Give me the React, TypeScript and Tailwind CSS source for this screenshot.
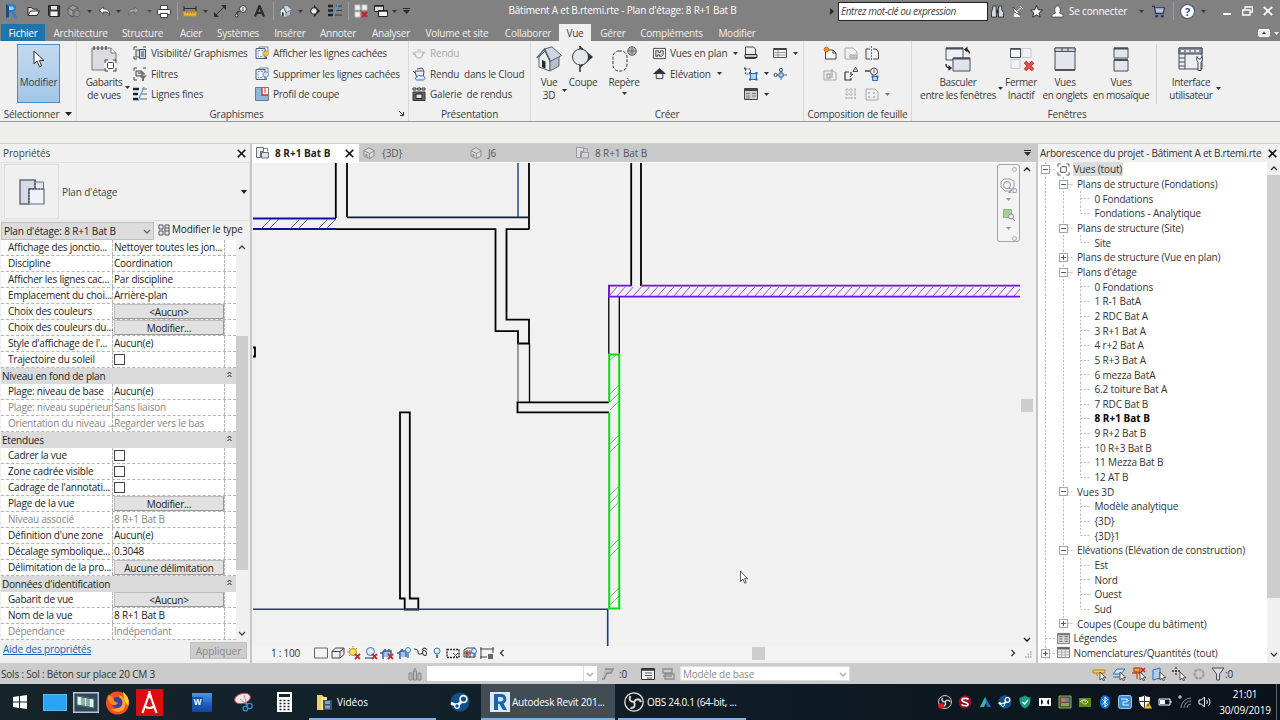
import type { ReactNode } from 'react';
import clsx from 'clsx';

type IcoProps = { w: number; h?: number; vb?: string; className?: string; children: ReactNode };

function Ico({ w, h = w, vb = '0 0 14 14', className, children }: IcoProps) {
  return (
    <svg width={w} height={h} viewBox={vb} fill="none" className={clsx('shrink-0', className)}>
      {children}
    </svg>
  );
}

function Caret({ className }: { className?: string }) {
  return (
    <Ico w={5} h={3} vb="0 0 5 3" className={className}>
      <path d="M0 0h5L2.5 3z" fill="currentColor" />
    </Ico>
  );
}

function Sep({ className }: { className?: string }) {
  return <div className={clsx('h-[18px] w-px shrink-0 bg-[#9c9c9c]', className)} />;
}

function XMark({ size = 9, className }: { size?: number; className?: string }) {
  return (
    <Ico w={size} vb="0 0 9 9" className={className}>
      <path d="M.7.7l7.6 7.6M8.3.7L.7 8.3" stroke="currentColor" strokeWidth="1.6" />
    </Ico>
  );
}

function Chevron({ dir, className }: { dir: 'up' | 'down' | 'left' | 'right'; className?: string }) {
  const d = {
    up: 'M1 5l3-3 3 3',
    down: 'M1 3l3 3 3-3',
    left: 'M5.5 1l-3 3 3 3',
    right: 'M2.5 1l3 3-3 3',
  }[dir];
  return (
    <Ico w={8} vb="0 0 8 8" className={className}>
      <path d={d} stroke="currentColor" strokeWidth="1.3" />
    </Ico>
  );
}

/* ---------- shared drawings ---------- */

function HouseIcon({ size, className }: { size: number; className?: string }) {
  return (
    <Ico w={size} vb="0 0 26 26" className={className}>
      <path d="M3 11l6-6 5 10v10l-11-4z" fill="#e9edf2" stroke="#5b626c" />
      <path d="M14 15l9-5v10l-9 5z" fill="#b3bfd0" stroke="#5b626c" />
      <path d="M8.500 3L16 .8 25.500 9.500 14 15.500z" fill="#cdd6e1" stroke="#5b626c" />
      <path d="M.8 12L8.500 3l6 12.500" stroke="#5b626c" strokeWidth="1.500" />
      <path d="M6 14l3.500 1.500v7L6 21.300z" fill="#26292e" />
    </Ico>
  );
}

function TabHouseIcon() {
  return (
    <Ico w={12} vb="0 0 12 12">
      <path d="M1 3.500L6 .8l5 2.700v5.500l-4.500 2.500L1 9z" fill="#dadada" stroke="#8c8c8c" />
      <path d="M1.500 4l5 2.500L11 4M6.500 6.500v5" stroke="#8c8c8c" />
      <path d="M2.500 6.500l2 1V10l-2-1z" fill="#8c8c8c" />
    </Ico>
  );
}

function PlanIcon({ size, className }: { size: number; className?: string }) {
  return (
    <Ico w={size} vb="0 0 26 26" className={className}>
      <path d="M1 1h15v9h-6v15H1z" fill="#d5d9e8" stroke="#666c78" strokeWidth="1.500" />
      <path d="M16.500 3h8v7" fill="#dfe2ee" stroke="#6c727e" />
      <path d="M16 1v9h-6" stroke="#444a55" strokeDasharray="2 1" />
      <path d="M10 10h15v15H10z" fill="#f0f2fa" stroke="#666c78" strokeWidth="1.200" />
      <path d="M10 10h15M10 10v15" stroke="#444a55" strokeDasharray="2 1" />
    </Ico>
  );
}

// same motif redrawn for small sizes, where the dashes of the large one clog up
function SmallPlanIcon({ faded, className }: { faded?: boolean; className?: string }) {
  return (
    <Ico w={13} h={12} vb="0 0 13 12" className={clsx(faded && 'opacity-50', className)}>
      <path d="M.5.5h7v4h-3v6h-4z" fill="#eceef5" stroke="#666c78" />
      <path d="M7.500 1.500h4v3" stroke="#7b818d" />
      <path d="M5.500 5.500h7v5.500h-7z" fill="#dfe2ee" stroke="#666c78" />
    </Ico>
  );
}

function SteamIcon({ size }: { size: number }) {
  return (
    <Ico w={size} vb="0 0 20 20">
      <circle cx="10" cy="10" r="9.500" fill="#12508c" />
      <path d="M1 11l6 3M8 13l5-5" stroke="#fff" strokeWidth="3" />
      <circle cx="13.500" cy="7" r="3.400" fill="#1a4d80" stroke="#fff" strokeWidth="1.700" />
      <circle cx="7" cy="14" r="2.300" fill="#12508c" stroke="#fff" strokeWidth="1.300" />
    </Ico>
  );
}

function ObsIcon({ size, dot }: { size: number; dot?: boolean }) {
  return (
    <Ico w={size} vb="0 0 20 20">
      <circle cx="10" cy="10" r="9.200" fill="#15181b" stroke="#e6e6e6" strokeWidth="1.300" />
      <path d="M10 10c-4 0-5.500-3-3.500-6M10 10c2-3.600 5.500-3.500 7 0M10 10c2 3.500 0 6.500-3.500 6" stroke="#dcdcdc" strokeWidth="2" />
      {dot && <circle cx="4.500" cy="15.500" r="4.200" fill="#e01b1b" />}
    </Ico>
  );
}

function CursorShape({ w, h, className }: { w: number; h: number; className?: string }) {
  return (
    <Ico w={w} h={h} vb="0 0 12 18" className={className}>
      <path d="M1 1v13l3-3 2.500 5.800 2.200-1L6.300 10.500H11z" fill="#fff" stroke="#333" />
    </Ico>
  );
}

/* ---------- title bar ---------- */

function TitleBar() {
  return (
    <div className="flex h-6 items-center pb-0.5 text-[#3a3a3a]">
      <Ico w={13} h={16} vb="0 0 13 16" className="ml-[5px]">
        <path d="M1 1h6.500a4 4 0 011.700 7.500L12 15H9L6.500 9.500H4V15H1z" fill="#2f7fc4" />
        <path d="M4 3.500h3a1.700 1.700 0 010 3.500H4z" fill="#a9d0ee" />
        <path d="M1 1v14l3-1.500v-10z" fill="#164f86" />
      </Ico>
      <Ico w={13} h={11} vb="0 0 13 11" className="ml-[9px]">
        <path d="M1 9V1.500h3.500l1 1.500H10v2" fill="#e6e6e6" stroke="#2c2c2c" />
        <path d="M1 9.500l2.500-4.500h9L10 9.500z" fill="#fafafa" stroke="#2c2c2c" />
      </Ico>
      <Ico w={12} vb="0 0 12 12" className="ml-2">
        <path d="M.5.5h11v11h-10l-1-1z" fill="#3b3f45" stroke="#24272b" />
        <rect x="3" y="1" width="6" height="3.500" fill="#e8e8e8" />
        <rect x="2.500" y="6.500" width="7" height="4.500" fill="#f2f2f2" />
      </Ico>
      <Ico w={14} className="ml-[7px]">
        <path d="M1 4l5-3 5 3v6l-5 3-5-3z" fill="#9b9b9b" stroke="#5a5a5a" />
        <path d="M1 4l5 2.500L11 4M6 6.500V13" stroke="#5a5a5a" />
        <circle cx="10" cy="9.500" r="3.200" fill="#8d8d8d" stroke="#666" />
      </Ico>
      <Caret className="ml-1.5" />
      <Ico w={13} h={11} vb="0 0 12 10" className="ml-1.5">
        <path d="M5 .8L1 4l4 3.200V5.300c3 0 4.600.5 5.600 3.200.5-4-1.600-5.800-5.600-5.800z" fill="#fff" stroke="#333" strokeWidth=".7" />
      </Ico>
      <Caret className="ml-[5px]" />
      <Ico w={13} h={11} vb="0 0 12 10" className="ml-1.5">
        <path d="M7 .8L11 4 7 7.200V5.300c-3 0-4.600.5-5.600 3.200-.5-4 1.600-5.800 5.600-5.800z" fill="#a2a2a2" stroke="#636363" strokeWidth=".7" />
      </Ico>
      <Caret className="ml-[7px] opacity-60" />
      <Ico w={14} h={13} vb="0 0 14 13" className="ml-[5px]">
        <path d="M3.500.5h7V5h-7z" fill="#fff" stroke="#444" />
        <rect x=".5" y="4.500" width="13" height="5" rx="1" fill="#f3f3f3" stroke="#333" />
        <path d="M3.500 8.500h7v4h-7z" fill="#fff" stroke="#444" />
      </Ico>
      <Sep className="ml-1.5" />
      <Ico w={14} h={11} vb="0 0 14 11" className="ml-[5px]">
        <path d="M1 0v5M13 0v5M1 2.500h12" stroke="#2b2b2b" />
        <rect x=".5" y="6" width="13" height="4" fill="#f0b642" stroke="#c98d25" />
        <path d="M3.500 6v2M6 6v2M8.500 6v2M11 6v2" stroke="#a9741a" strokeWidth=".7" />
      </Ico>
      <Caret className="ml-1.5" />
      <Ico w={12} vb="0 0 12 12" className="ml-1.5">
        <path d="M2 10l8-8" stroke="#2f2f2f" />
        <path d="M0 12V7l5 5zM12 0v5L7 0z" fill="#2f2f2f" />
      </Ico>
      <Ico w={13} vb="0 0 13 13" className="ml-2">
        <circle cx="9" cy="4" r="3.400" fill="#fff" stroke="#2b2b2b" />
        <path d="M9 2.200V6M5.500 6.500L3 7v3" stroke="#222" />
        <circle cx="2.500" cy="10.500" r="1.500" fill="#ddd" stroke="#222" />
      </Ico>
      <Ico w={11} h={12} vb="0 0 11 12" className="ml-[7px]">
        <path d="M1 11.500L5.500 1 10 11.500M2.800 8h5.400" stroke="#2a2a2a" strokeWidth="2.200" />
      </Ico>
      <Sep className="ml-2" />
      <HouseIcon size={13} className="ml-[5px]" />
      <Caret className="ml-1.5" />
      <Ico w={10} h={12} vb="0 0 10 12" className="ml-[7px]">
        <path d="M4 0l6 6-6 6z" fill="#222" />
        <circle cx="4" cy="6" r="3.300" fill="#eee" stroke="#222" />
      </Ico>
      <Ico w={14} className="ml-2">
        <path d="M0 2h5M0 6.500h5M0 11h5" stroke="#232323" strokeWidth="2.400" />
        <path d="M8 2h6M7 6.500h7M6 11h8" stroke="#3a3a3a" />
        <path d="M10 0L5 14" stroke="#4ea2de" strokeWidth="1.200" />
      </Ico>
      <Sep className="ml-1.5" />
      <Ico w={14} className="ml-[5px]">
        <path d="M1 1h5v5H1zM8 1h5v5H8zM1 8h5v5H1z" fill="#f2f2f2" stroke="#c2c2c2" />
        <path d="M8 8l5 5M13 8l-5 5" stroke="#c4252b" strokeWidth="2.400" />
      </Ico>
      <Ico w={14} className="ml-1.5">
        <path d="M.5 1.500h9v6h-9z" fill="#ddd" stroke="#222" />
        <path d="M4.500 6.500h9v6h-9z" fill="#f3f3f3" stroke="#222" />
        <path d="M4.500 7h9M.5 2h9" stroke="#222" strokeWidth="1.400" />
      </Ico>
      <Caret className="ml-1" />
      <Ico w={7} h={6} vb="0 0 7 6" className="ml-1.5">
        <path d="M0 .5h7" stroke="#2b2b2b" />
        <path d="M0 2h7L3.500 6z" fill="#2b2b2b" />
      </Ico>
      <div className="ml-[97px] w-[231px] shrink-0 pb-[3px] text-center text-[10px] tracking-[-0.22px] whitespace-nowrap text-white">
        Bâtiment A et B.rtemi.rte - Plan d'étage: 8 R+1 Bat B
      </div>
      <Ico w={4} h={7} vb="0 0 4 7" className="ml-[92px]">
        <path d="M0 0l4 3.500L0 7z" fill="#2b2b2b" />
      </Ico>
      <div className="ml-1 flex h-[19px] w-[150px] shrink-0 items-center border border-[#222] bg-white pl-[2px] text-[10px] tracking-[-0.42px] whitespace-nowrap italic text-[#444]">
        Entrez mot-clé ou expression
      </div>
      <Ico w={13} className="ml-[3px]">
        <path d="M2.500 1h3v4L6 13H.5V8zM8.500 1h3v4l2 3v5H8V5z" fill="#d5dae0" stroke="#2b2f36" />
        <path d="M6 5h2v4H6z" fill="#2b2f36" />
      </Ico>
      <Ico w={12} vb="0 0 12 12" className="ml-2">
        <path d="M1 2c0 5 3 7 7.500 7z" fill="#fff" stroke="#333" strokeWidth=".8" />
        <path d="M5 6l5-4M8 1l3 3M3 8l-1 3.500h6z" stroke="#eee" fill="#eee" />
      </Ico>
      <Ico w={13} className="ml-[6px]">
        <path d="M7 .8l1.800 4.300 4.600.4-3.500 3 1.100 4.600L7 10.600l-4 2.500 1.100-4.600-3.500-3 4.600-.4z" fill="#f6f6f6" stroke="#222" />
      </Ico>
      <Ico w={13} className="ml-2">
        <path d="M1 13v-2c0-1.200 3-1.500 4-2.500C3.500 7 3.500 1 7 1s3.500 6 2 7.500c1 1 4 1.300 4 2.500v2z" fill="#fff" stroke="#3a3a3a" strokeWidth=".8" />
      </Ico>
      <div className="ml-[5px] w-[62px] shrink-0 text-[10px] tracking-[-0.2px] whitespace-nowrap text-white">Se connecter</div>
      <Caret className="ml-2" />
      <Ico w={13} className="ml-2">
        <path d="M0 1.500h2.500L4 9h8l1.500-6H3" fill="#b9c5de" stroke="#2a3355" strokeWidth="1.200" />
        <circle cx="5" cy="12" r="1.500" fill="#2a3355" />
        <circle cx="11" cy="12" r="1.500" fill="#2a3355" />
      </Ico>
      <Sep className="ml-2" />
      <div className="ml-[7px] flex size-[13px] shrink-0 items-center justify-center rounded-full bg-white text-[11px] font-bold text-[#28529c] ring-1 ring-[#44557a]">
        ?
      </div>
      <Caret className="ml-[7px]" />
      <div className="mt-1.5 ml-[17px] h-0.5 w-2 shrink-0 bg-white" />
      <Ico w={11} h={10} vb="0 0 11 10" className="ml-[11px]">
        <path d="M3 3V1h7.500v5H8" stroke="#fff" strokeWidth="1.300" />
        <path d="M.7 4h7.300v5H.7z" stroke="#fff" strokeWidth="1.300" />
      </Ico>
      <XMark size={10} className="ml-2.5 text-white" />
    </div>
  );
}

const TABS: [string, string][] = [
  ['Architecture', 'w-[53px] ml-[9px]'],
  ['Structure', 'w-[39px] ml-4'],
  ['Acier', 'w-[22px] ml-[18px]'],
  ['Systèmes', 'w-10 ml-4'],
  ['Insérer', 'w-[30px] ml-[17px]'],
  ['Annoter', 'w-[34px] ml-4'],
  ['Analyser', 'w-[36px] ml-[18px]'],
  ['Volume et site', 'w-[62px] ml-[17px]'],
  ['Collaborer', 'w-[46px] ml-[17px]'],
  ['Vue', 'w-[32px] ml-2 bg-[#f0f0f0] text-[#3c3c3c]'],
  ['Gérer', 'w-6 ml-[10px]'],
  ['Compléments', 'w-[61px] ml-4'],
  ['Modifier', 'w-[38px] ml-4'],
];

function RibbonTabs() {
  return (
    <div className="flex h-[17px] text-[10px] tracking-[-0.25px] text-[#f0f0f0]">
      <div className="ml-px flex w-11 items-center justify-center bg-[#1e74ab] text-white">Fichier</div>
      {TABS.map(([name, cls]) => (
        <div key={name} className={clsx('flex shrink-0 items-center justify-center whitespace-nowrap', cls)}>
          {name}
        </div>
      ))}
      <div className="mt-[5px] ml-auto flex h-2 items-start">
        <Ico w={12} h={8} vb="0 0 12 8" className="mr-1">
          <rect x=".5" y=".5" width="11" height="7" rx="1.500" fill="#e9e9e9" stroke="#fff" />
          <path d="M4 5l2-2.500L8 5z" fill="#333" />
        </Ico>
        <Caret className="mt-[3px] mr-px text-[#eee]" />
      </div>
    </div>
  );
}

/* ---------- ribbon ---------- */

function Panel({ title, className, children, extra }: { title: string; className: string; children: ReactNode; extra?: ReactNode }) {
  return (
    <div className={clsx('flex shrink-0 flex-col border-r border-[#d9d9d9]', className)}>
      <div className="flex h-[65px]">{children}</div>
      <div className="flex h-[15px] items-center justify-center whitespace-nowrap">
        {title}
        {extra}
      </div>
    </div>
  );
}

function BigButton({ icon, lines, className }: { icon: ReactNode; lines: string[]; className: string }) {
  return (
    <div className={clsx('flex shrink-0 flex-col items-center tracking-[-0.34px] whitespace-nowrap', className)}>
      <div className="mt-[5px] flex h-[29px] items-start">{icon}</div>
      {lines.map((l) => (
        <div key={l} className="flex h-[13.5px] items-center">
          {l}
        </div>
      ))}
    </div>
  );
}

function SmallRow({ icon, label, disabled, caret }: { icon: ReactNode; label?: string; disabled?: boolean; caret?: boolean }) {
  return (
    <div className={clsx('flex h-[20.5px] items-center whitespace-pre', disabled && 'text-[#a9a9a9]')}>
      {icon}
      {label && <span className="ml-1">{label}</span>}
      {caret && <Caret className="ml-1.5 text-[#333]" />}
    </div>
  );
}

function FrameCorners() {
  return <path d="M1 4V1h3M10 1h3M1 10v3h3" stroke="#444" />;
}

function Ribbon() {
  return (
    <div className="flex h-[81px] border-b border-[#9a9a9a] bg-[#f0f0f0] text-[10px] tracking-[-0.2px] text-[#3c3c3c]">
      <Panel title="Sélectionner" className="w-[77px]" extra={<Ico w={7} h={4} vb="0 0 7 4" className="ml-1.5"><path d="M0 0h7L3.500 4z" fill="#222" /></Ico>}>
        <div className="mt-[3px] ml-[17px] flex h-[59px] w-[43px] flex-col items-center border border-[#4a8cc8] bg-[linear-gradient(#c3d9ef,#a3c6e8)]">
          <CursorShape w={12} h={18} className="mt-[5px]" />
          <div className="mt-[9px] whitespace-nowrap">Modifier</div>
        </div>
      </Panel>

      <Panel
        title="Graphismes"
        className="w-[332px]"
        extra={
          <Ico w={5} vb="0 0 5 5" className="-mr-[128px] ml-[135px]">
            <path d="M0 0l4 4M4.500 1v3.500H1" stroke="#333" />
          </Ico>
        }
      >
        <BigButton
          className="ml-[6px] w-[42px]"
          lines={['Gabarits', 'de vues']}
          icon={
            <Ico w={26} vb="0 0 26 26">
              <path d="M1 2h19l5 5v17H1z" fill="#dcdce0" stroke="#77777c" />
              <path d="M20 2v5h5" fill="#f5f5f5" stroke="#77777c" />
              <path d="M3 0v4M7 0v4M11 0v4M15 0v4" stroke="#444" strokeWidth="1.200" />
              <path d="M13 14h13v12H13z" fill="#f0f0f0" />
              <path d="M14 17v-3h3M22 14h3v3M25 22v3h-3M17 25h-3v-3" stroke="#333" />
              <rect x="16.500" y="16.500" width="6" height="6" rx="1" fill="#fff" stroke="#444" />
            </Ico>
          }
        />
        <Caret className="mt-[45px] text-[#333]" />
        <div className="ml-[3px] w-[122px] pt-[2px]">
          <SmallRow
            label="Visibilité/ Graphismes"
            icon={
              <Ico w={14}>
                <FrameCorners />
                <rect x="3" y="4" width="5" height="7" fill="#ddd" stroke="#555" />
                <path d="M6.500 3.500h6v9h-6z" fill="#cfd8e6" stroke="#41506b" />
                <path d="M8 6h3M8 8h3M8 10h3" stroke="#41506b" />
              </Ico>
            }
          />
          <SmallRow
            label="Filtres"
            icon={
              <Ico w={14}>
                <FrameCorners />
                <path d="M3 4h6v5H3zM5 6h6v2" stroke="#444" fill="#ddd" />
                <path d="M6 8.500h8l-3 3V14H9v-2.500z" fill="#6b6f77" />
              </Ico>
            }
          />
          <SmallRow
            label="Lignes fines"
            icon={
              <Ico w={14}>
                <path d="M0 2h6M0 7h5M0 12h5" stroke="#222" strokeWidth="2.400" />
                <path d="M9 2h5M8 7h6M7 12h7" stroke="#666" />
                <path d="M11 0L5 14" stroke="#4ea2de" strokeWidth="1.300" />
              </Ico>
            }
          />
        </div>
        <div className="pt-[2px] tracking-[-0.27px]">
          <SmallRow
            label="Afficher les lignes cachées"
            icon={
              <Ico w={14}>
                <path d="M4 1h9v5H4z" fill="#e8edf6" stroke="#7b8797" />
                <path d="M1 2.500h9v10H1z" fill="#eef1f8" stroke="#4a5e80" />
                <path d="M3 4.500h5v6H3z" stroke="#8ba0c2" strokeDasharray="2 1" />
                <circle cx="11" cy="7.500" r="2.600" fill="#f8c544" stroke="#b9831c" strokeWidth=".6" />
                <path d="M10 10.500h2v2.500h-2z" fill="#666" />
              </Ico>
            }
          />
          <SmallRow
            label="Supprimer les lignes cachées"
            icon={
              <Ico w={14}>
                <path d="M4 1h9v5H4z" fill="#e8edf6" stroke="#7b8797" />
                <path d="M1 2.500h9v10H1z" fill="#eef1f8" stroke="#4a5e80" />
                <path d="M3 4.500h5v6H3z" stroke="#8ba0c2" strokeDasharray="2 1" />
                <circle cx="11" cy="7.500" r="2.600" fill="#dbe7f8" stroke="#6c88b2" strokeWidth=".8" />
                <path d="M10 10.500h2v2.500h-2z" fill="#6c88b2" />
              </Ico>
            }
          />
          <SmallRow
            label="Profil de coupe"
            icon={
              <Ico w={14}>
                <path d="M.5.5h13v13H.5z" fill="#fff" stroke="#777" />
                <path d="M1 1h6v7h6v5H1z" fill="#8db6da" />
                <path d="M7 1v7h6" stroke="#cc2a35" strokeWidth="1.300" />
                <path d="M10 1v5" stroke="#cc2a35" />
              </Ico>
            }
          />
        </div>
      </Panel>

      <Panel title="Présentation" className="w-[122px]">
        <div className="pt-[2px] pl-[3px]">
          <SmallRow
            label="Rendu"
            disabled
            icon={
              <Ico w={14}>
                <path d="M3 6h8c0 4-1.500 6-4 6s-4-2-4-6zM1 6c0 2 1 3 2.500 3M11 8l2-2M5 4h4" stroke="#bcbcbc" strokeWidth="1.200" />
              </Ico>
            }
          />
          <SmallRow
            label="Rendu  dans le Cloud"
            icon={
              <Ico w={14}>
                <path d="M3 4h9l-1 8H5zM1 4l3 3M5 2l5-1 2 3" stroke="#44506a" fill="#eef2fa" />
                <path d="M5 13c-2 0-2-3 0-3 0-2 3-2 4-1 2-1 4 1 4 2s-1 2-2 2z" fill="#dfeaff" stroke="#3c6ecb" />
              </Ico>
            }
          />
          <SmallRow
            label="Galerie  de rendus"
            icon={
              <Ico w={14}>
                <path d="M1 1h3v2H1zM5.500 1h3v2h-3zM10 1h3v2h-3z" stroke="#333" />
                <path d="M1 5h12v8.500H1z" fill="#62666d" stroke="#333" />
                <path d="M4 7h6v4.500H4z" fill="#e5e5e5" stroke="#222" />
              </Ico>
            }
          />
        </div>
      </Panel>

      <Panel title="Créer" className="w-[273px]">
        <BigButton className="ml-[3px] w-[30px]" lines={['Vue', '3D']} icon={<HouseIcon size={26} />} />
        <Caret className="mt-[48px] -mr-[5px] -ml-0.5 text-[#333]" />
        <BigButton
          className="ml-1 w-[34px]"
          lines={['Coupe']}
          icon={
            <Ico w={24} h={26} vb="0 0 24 26">
              <path d="M9 0l13 11L9 22z" fill="#2f3238" />
              <path d="M9 0v26" stroke="#2f3238" strokeWidth="1.500" />
              <circle cx="9.500" cy="11" r="8" fill="#e4e7ec" stroke="#3c4048" />
            </Ico>
          }
        />
        <BigButton
          className="ml-[6px] w-[36px]"
          lines={['Repère']}
          icon={
            <Ico w={25} h={26} vb="0 0 25 26">
              <rect x="1" y="5" width="14" height="20" rx="6" stroke="#333" strokeDasharray="3 1.500" />
              <circle cx="20" cy="5" r="4.300" fill="#b5b5b5" stroke="#666" />
              <path d="M16 5h8M20 1v8" stroke="#555" strokeWidth=".8" />
            </Ico>
          }
        />
        <Caret className="mt-[51px] mr-[15px] -ml-[20px] text-[#333]" />
        <div className="ml-[11px] w-[91px] pt-[2px]">
          <SmallRow
            label="Vues en plan"
            caret
            icon={
              <Ico w={13} vb="0 0 14 14">
                <path d="M.5 1.500h13v11H.5z" fill="#f7f7f7" stroke="#444" />
                <path d="M3 4h3v2h2V4h3v4.500L9 10H7V8.500H5V10H3z" stroke="#444" fill="#ddd" />
              </Ico>
            }
          />
          <SmallRow
            label="Elévation"
            caret
            icon={
              <Ico w={13} vb="0 0 14 14">
                <path d="M7 1l7 6.500H0z" fill="#333" />
                <path d="M3.500 6.500h7v6h-7z" fill="#eee" stroke="#333" />
                <path d="M3 4.500h8v3H3z" fill="#333" />
              </Ico>
            }
          />
        </div>
        <div className="w-[29px] pt-[2px]">
          <SmallRow
            icon={
              <Ico w={14}>
                <path d="M1.500 1h8l2 2v9.500h-10z" fill="#eee" stroke="#444" />
                <path d="M1 8.500h12v3H1z" fill="#c9c9c9" stroke="#333" />
              </Ico>
            }
          />
          <SmallRow
            caret
            icon={
              <Ico w={14}>
                <path d="M1.500 2h5v5h-5z" stroke="#555" strokeDasharray="2 1" />
                <path d="M6.500 6.500h6v6h-6z" fill="#b5d3f1" stroke="#2d6db5" />
                <path d="M5 5h2v2H5zM11.500 5h2v2h-2zM5 11.500h2v2H5zM11.500 11.500h2v2h-2zM0 .5h2v2H0z" fill="#2d5f9c" />
              </Ico>
            }
          />
          <SmallRow
            caret
            icon={
              <Ico w={14}>
                <path d="M.5 1.500h13v11H.5z" fill="#cfcfcf" stroke="#444" />
                <path d="M1 3h12" stroke="#444" strokeWidth="2" />
                <path d="M2 6.500h4M8 6.500h4M2 9h4M8 9h4M2 11h4" stroke="#777" />
              </Ico>
            }
          />
        </div>
        <div className="pt-[2px]">
          <SmallRow
            caret
            icon={
              <Ico w={14}>
                <path d="M.5 2.500h13v9H.5z" fill="#f4f4f4" stroke="#555" />
                <path d="M.5 3h13" stroke="#444" strokeWidth="2" />
                <path d="M1 6.500h12M1 9h12M5 4v7" stroke="#888" strokeWidth=".8" />
              </Ico>
            }
          />
          <SmallRow
            icon={
              <Ico w={14}>
                <path d="M8 1v12M1 8h13" stroke="#3c6ea8" />
                <circle cx="2.500" cy="8" r="1.600" fill="#eee" stroke="#444" />
                <circle cx="8" cy="3" r="1.600" fill="#eee" stroke="#444" />
                <path d="M6 6h4v4H6z" fill="#b5d3f1" stroke="#2d6db5" />
              </Ico>
            }
          />
        </div>
      </Panel>

      <Panel title="Composition de feuille" className="w-[108px]">
        <div className="ml-[19px] grid grid-cols-[21px_21px_14px] grid-rows-[20.5px_20.5px_20.5px] items-center pt-0.5">
          <Ico w={14}>
            <path d="M2.500 4h7.500l3 3v6H2.500z" fill="#f7f7f7" stroke="#444" />
            <path d="M10 4v3h3" stroke="#444" />
            <circle cx="3.500" cy="3.500" r="2.300" fill="#f59a31" stroke="#cf6410" />
          </Ico>
          <Ico w={14} className="opacity-45">
            <path d="M1 2h8l4 4v7H1z" stroke="#555" />
            <path d="M6 9h7v3H6z" fill="#999" stroke="#555" />
          </Ico>
          <Ico w={14}>
            <path d="M5 3H1v10h4M8 3h3l2.500 3v7H8" fill="#f3f3f3" stroke="#444" />
            <path d="M6.500 0v14" stroke="#2f86c9" strokeDasharray="2 1" />
          </Ico>
          <Ico w={14} className="opacity-45">
            <path d="M1 4h9l3 2v7H1z" stroke="#555" />
            <path d="M4 7h3v4H4zM9 2v9" stroke="#555" strokeWidth="1.300" />
          </Ico>
          <Ico w={14}>
            <path d="M1 5h4M1 5v8h6v-2M7 8V5" stroke="#333" strokeWidth="1.200" />
            <path d="M11.500 0l2.500 4.500H9z" fill="#ccc" stroke="#333" strokeWidth=".8" />
            <path d="M6 10l3-3" stroke="#333" />
          </Ico>
          <Ico w={14}>
            <path d="M0 4h5" stroke="#333" strokeWidth="1.400" />
            <circle cx="9" cy="4.500" r="3.500" fill="#fafafa" stroke="#444" />
            <path d="M9 2.500V6" stroke="#444" />
            <path d="M7.500 9.500h5v4h-5z" fill="#b5d3f1" stroke="#2d6db5" />
            <path d="M6.500 8.500h2v2h-2zM11.500 8.500h2v2h-2z" fill="#2d5f9c" />
          </Ico>
          <span />
          <Ico w={14} className="opacity-40">
            <path d="M1 3h12M1 7h12M1 11h12M3 1v12M7 1v12M11 1v12" stroke="#555" strokeDasharray="2 1" />
          </Ico>
          <div className="flex items-center">
            <Ico w={14} className="opacity-45">
              <path d="M1 2h9l3 3v8H1z" stroke="#555" />
              <path d="M3 6h2M3 10h2M8 6h2M8 10h2" stroke="#555" strokeWidth="1.500" />
            </Ico>
            <Caret className="ml-1.5 text-[#777]" />
          </div>
        </div>
      </Panel>

      <div className="flex flex-col">
        <div className="flex h-[65px]">
          <BigButton
            className="ml-[6px] w-20"
            lines={['Basculer', 'entre les fenêtres']}
            icon={
              <Ico w={26} vb="0 0 26 26">
                <path d="M1 2h17v12H1z" fill="#eceff5" stroke="#4a4d54" />
                <path d="M1 2.500h17" stroke="#4a4d54" strokeWidth="2" />
                <path d="M8 12h17v13H8z" fill="#dfe3ec" stroke="#4a4d54" />
                <path d="M8 12.500h17" stroke="#4a4d54" strokeWidth="2" />
                <path d="M20 3.500c3 0 4 1 4.500 4M1 18c0 3 1 4 4.500 4" stroke="#222" strokeWidth="1.400" />
                <path d="M19 3.500L22.500.5v6zM7 22l-3.500-3v6z" fill="#222" />
              </Ico>
            }
          />
          <Caret className="mt-[46px] text-[#333]" />
          <BigButton
            className="-ml-[4px] w-10 pl-1"
            lines={['Fermer', 'Inactif']}
            icon={
              <Ico w={25} vb="0 0 25 25">
                <path d="M13 2.500h9v9h-9zM2 13.500h9v9H2z" fill="#f0f2f8" stroke="#c2c7d2" />
                <path d="M1.500 2.500h10v9h-10z" fill="#f3f3f6" stroke="#4a4d54" />
                <path d="M1.500 3h10" stroke="#4a4d54" strokeWidth="1.500" />
                <path d="M16 16l8 8M24 16l-8 8" stroke="#c62b2f" strokeWidth="3.600" />
                <path d="M16.500 16.500l7 7M23.500 16.500l-7 7" stroke="#ee5b55" strokeWidth="1.500" />
              </Ico>
            }
          />
          <BigButton
            className="ml-px w-[50px]"
            lines={['Vues', 'en onglets']}
            icon={
              <Ico w={22} h={26} vb="0 0 22 26">
                <path d="M1 2h20v22H1z" fill="#e4e6ee" stroke="#4a4d54" />
                <path d="M1 2h20v3.500H1z" fill="#cfd3dd" stroke="#4a4d54" />
                <path d="M8 2v3.500M14 2v3.500" stroke="#4a4d54" />
                <path d="M1 24h20" stroke="#4a4d54" strokeWidth="1.800" />
              </Ico>
            }
          />
          <BigButton
            className="w-[62px]"
            lines={['Vues', 'en mosaïque']}
            icon={
              <Ico w={16} h={26} vb="0 0 16 26">
                <path d="M1 2h14v10H1zM1 14h14v11H1z" fill="#e4e6ee" stroke="#4a4d54" />
                <path d="M1 2.500h14M1 14h14" stroke="#4a4d54" strokeWidth="2.200" />
              </Ico>
            }
          />
          <div className="mt-[3px] ml-[4px] h-[60px] w-px bg-[#cfcfcf]" />
          <BigButton
            className="ml-2 w-[52px]"
            lines={['Interface', 'utilisateur']}
            icon={
              <Ico w={26} vb="0 0 26 26">
                <path d="M1 2h23v21H1z" fill="#eceef4" stroke="#4a4d54" />
                <path d="M1 2h23v6H1z" fill="#8d929c" stroke="#4a4d54" />
                <path d="M3 5h3M8 5h3M13 5h3M18 5h3" stroke="#e9e9e9" strokeWidth="2" />
                <path d="M1 12h6M1 16h6M1 20h6M7 8v15" stroke="#4a4d54" />
                <path d="M19 10.500c-1 4 .5 4.500 1 6v8h3v-8c.5-1.500 2-2 1-6l-1.500 2.500h-2z" fill="#f3f4f7" stroke="#3d4148" />
              </Ico>
            }
          />
          <Caret className="mt-[46px] -ml-px text-[#333]" />
        </div>
        <div className="flex h-[15px] w-[310px] items-center justify-center">Fenêtres</div>
      </div>
    </div>
  );
}

/* ---------- properties palette ---------- */

type Prop = { k: string; v?: string; kind?: 'btn' | 'check' | 'cat'; off?: boolean };

const PROPS: Prop[] = [
  { k: 'Affichage des jonctio...', v: 'Nettoyer toutes les jon...' },
  { k: 'Discipline', v: 'Coordination' },
  { k: 'Afficher les lignes cac...', v: 'Par discipline' },
  { k: 'Emplacement du choi...', v: 'Arrière-plan' },
  { k: 'Choix des couleurs', v: '<Aucun>', kind: 'btn' },
  { k: 'Choix des couleurs du...', v: 'Modifier...', kind: 'btn' },
  { k: "Style d'affichage de l'...", v: 'Aucun(e)' },
  { k: 'Trajectoire du soleil', kind: 'check' },
  { k: 'Niveau en fond de plan', kind: 'cat' },
  { k: 'Plage: niveau de base', v: 'Aucun(e)' },
  { k: 'Plage: niveau supérieur', v: 'Sans liaison', off: true },
  { k: 'Orientation du niveau ...', v: 'Regarder vers le bas', off: true },
  { k: 'Etendues', kind: 'cat' },
  { k: 'Cadrer la vue', kind: 'check' },
  { k: 'Zone cadrée visible', kind: 'check' },
  { k: "Cadrage de l'annotati...", kind: 'check' },
  { k: 'Plage de la vue', v: 'Modifier...', kind: 'btn' },
  { k: 'Niveau associé', v: '8 R+1 Bat B', off: true },
  { k: "Définition d'une zone", v: 'Aucun(e)' },
  { k: 'Décalage symbolique...', v: '0.3048' },
  { k: 'Délimitation de la pro...', v: 'Aucune délimitation', kind: 'btn' },
  { k: "Données d'identification", kind: 'cat' },
  { k: 'Gabarit de vue', v: '<Aucun>', kind: 'btn' },
  { k: 'Nom de la vue', v: '8 R+1 Bat B' },
  { k: 'Dépendance', v: 'Indépendant', off: true },
];

function PropRow({ p }: { p: Prop }) {
  if (p.kind === 'cat') {
    return (
      <div className="flex h-4 items-center bg-[#dadada] pl-px">
        {p.k}
        <Ico w={5} h={7} vb="0 0 5 7" className="mr-1 mb-1 ml-auto">
          <path d="M.5 3L2.500 1l2 2M.5 6l2-2 2 2" stroke="#222" />
        </Ico>
      </div>
    );
  }
  return (
    <div className={clsx('flex h-4 border-b border-dashed border-[#b5b5b5] bg-white whitespace-nowrap', p.off && 'text-[#858585]')}>
      <div className="flex w-[112px] shrink-0 items-center border-r border-dashed border-[#b5b5b5] pb-0.5 pl-[7px]">{p.k}</div>
      <div className="flex w-[112px] shrink-0 items-center border-r border-dashed border-[#b5b5b5]">
        {p.kind === 'check' && <div className="ml-px size-[11px] border border-[#444]" />}
        {p.kind === 'btn' && (
          <div className="ml-px flex h-[15px] grow items-center justify-center border border-[#bbb] border-r-[#999] border-b-[#999] bg-[#e1e1e1]">
            {p.v}
          </div>
        )}
        {!p.kind && <span className="pb-0.5 pl-px">{p.v}</span>}
      </div>
    </div>
  );
}

function Properties() {
  return (
    <div className="flex w-[252px] shrink-0 flex-col border-r-2 border-[#c6c6c6] bg-[#f0f0f0] pl-px text-[10px] tracking-[-0.14px] text-[#222]">
      <div className="flex h-[18px] items-center justify-between pr-1 pl-0.5 text-[#444]">
        Propriétés
        <XMark className="text-[#111]" />
      </div>
      <div className="flex h-[59px] items-center border border-[#e2e2e2]">
        <div className="ml-0.5 flex h-[55px] w-[55px] items-center justify-center border border-[#dcdcdc]">
          <PlanIcon size={26} />
        </div>
        <span className="ml-[3px] text-[#444]">Plan d'étage</span>
        <Ico w={6} h={4} vb="0 0 6 4" className="mr-[2px] ml-auto">
          <path d="M0 0h6L3 4z" fill="#222" />
        </Ico>
      </div>
      <div className="flex h-[19px] items-center whitespace-nowrap">
        <div className="flex h-[18px] w-[153px] items-center justify-between border border-[#bdbdbd] bg-[#dcdcdc] pr-0.5 pl-0.5">
          Plan d'étage: 8 R+1 Bat B
          <Chevron dir="down" className="text-[#666]" />
        </div>
        <Ico w={12} vb="0 0 12 12" className="mb-0.5 ml-1">
          <path d="M1 1h4v4H1zM1 7h4v4H1zM7 1h4v10H7z" stroke="#555" fill="#e9edf4" />
          <path d="M7 4h4M7 7h4" stroke="#555" />
        </Ico>
        <span className="mb-[3px] ml-[2px]">Modifier le type</span>
      </div>
      <div className="flex h-[401px]">
        <div className="w-[235px] tracking-[-0.22px]">
          {PROPS.map((p) => (
            <PropRow key={p.k} p={p} />
          ))}
        </div>
        <div className="flex w-[12px] flex-col items-center">
          <Chevron dir="up" className="mt-1 text-[#444]" />
          <div className="mt-[84px] h-[234px] w-[12px] bg-[#cdcdcd]" />
          <Chevron dir="down" className="mt-[59px] text-[#444]" />
        </div>
      </div>
      <div className="flex h-[15px] items-center justify-between pr-[3px] pl-0.5">
        <span className="text-[#1a5fb4] underline">Aide des propriétés</span>
        <div className="mt-1 flex h-[17px] w-[57px] shrink-0 items-center justify-center border border-[#bfbfbf] bg-[#cccccc] tracking-normal text-[#8a8a8a]">
          Appliquer
        </div>
      </div>
    </div>
  );
}

/* ---------- drawing view ---------- */

function FloorPlan() {
  return (
    <svg width="767" height="483" viewBox="253 163 767 483" fill="none" className="block">
      <defs>
        <pattern id="violetHatch" width="8.100" height="11" x="609" y="286" patternUnits="userSpaceOnUse">
          <path d="M-1 11L8 1M-9 11L0 1M7.100 11L16 1" stroke="#4f3d78" strokeWidth=".8" />
        </pattern>
      </defs>
      <path d="M253 218.500h83M253 229h83" stroke="#0a12a8" strokeWidth="1.800" />
      <path d="M261 229l10-10M269 229l10-10M290 229l10-10M298 229l10-10M318 229l10-10M326 229l10-10" stroke="#444" strokeWidth=".8" />
      <g stroke="#000" strokeWidth="1.800">
        <path d="M335.800 163v55M347 163v54M529 163v66.500M336 229.200h159.500v102h22.500v12.300h11V319.700h-22.500v-90.500h22.500" />
        <path d="M631.200 163v123M641 163v123" />
        <path d="M609 402.300h-91.500v10H609M404.700 598.500h-4.700V412.300h9.800v186.200h8.500v11h-13.600z" />
        <path d="M253 347.500h2v9h-2" />
      </g>
      <path d="M347 217.300h182" stroke="#0f2144" strokeWidth="1.700" />
      <path d="M518 163v54" stroke="#2c467f" strokeWidth="1.500" />
      <path d="M518 343v59" stroke="#444" />
      <path d="M529.500 343v59M608.800 297v57M619.300 297v57" stroke="#000" strokeWidth="1.300" />
      <path d="M253 609.300h354.700V646" stroke="#1c3a8c" strokeWidth="1.600" />
      <path d="M609 286h411v10.500H609z" fill="#f5edfb" />
      <path d="M609 286h411v10.500H609z" fill="url(#violetHatch)" />
      <path d="M631.500 285.600H609v11h412M641 285.600h380" stroke="#6a14d8" strokeWidth="1.900" />
      <path d="M610 360l6-5M610 394l9-9M610 402l9-9M610 410l9-9M610 444l9-9M610 452l9-9M610 495l9-9M610 503l9-9M610 511l9-9M610 548l9-9M610 556l9-9M610 597l9-9M610 605l9-9" stroke="#4dbd55" strokeWidth=".8" />
      <path d="M609.200 402.500V354.500h10V608.500h-10V412.500" stroke="#06dd12" strokeWidth="2" />
      <path d="M740.500 571v10.500l2.500-2.300 1.800 4 1.500-.7-1.700-3.800h3z" fill="#fff" stroke="#333" strokeWidth=".8" />
    </svg>
  );
}

function NavBar() {
  return (
    <div className="absolute top-px right-px flex h-[78px] w-[23px] flex-col items-center rounded-[3px] border border-[#a2a5a8] bg-[#f3f3f3]">
      <div className="mt-0.5 mr-0.5 size-[5px] shrink-0 self-end rounded-full border border-[#aaa]" />
      <Ico w={17} h={16} vb="0 0 17 16" className="mt-[6px]">
        <path d="M4 1h6l4 2v6l-3 4H5L1 9V4z" stroke="#9aa0a6" />
        <circle cx="7" cy="7" r="3.500" stroke="#8b9198" />
        <text x="8" y="15" fontSize="7" fill="#5f7f9c" fontFamily="Open Sans">2D</text>
      </Ico>
      <Caret className="mt-[4px] text-[#9a9a9a]" />
      <div className="mt-[3px] h-px w-[17px] bg-[#b2b2b2]" />
      <Ico w={12} h={12} vb="0 0 12 12" className="mt-[5px]">
        <path d="M.5.500h8v8h-8z" fill="#a9cf9c" stroke="#8bb07e" />
        <circle cx="8" cy="7.500" r="2.500" fill="#f2f2f2" stroke="#888" />
        <path d="M10 9.500l2 2.500" stroke="#888" />
      </Ico>
      <Caret className="mt-[6px] text-[#9a9a9a]" />
      <div className="mt-[6px] mr-0.5 size-[5px] shrink-0 self-end rounded-full border border-[#aaa]" />
    </div>
  );
}

function ViewTabs() {
  return (
    <div className="flex h-[18px] items-center bg-[#c9c9c9] text-[10px] tracking-[-0.1px] whitespace-nowrap text-[#555]">
      <div className="flex h-full w-[107px] items-center bg-white text-[#222]">
        <SmallPlanIcon className="ml-1" />
        <span className="ml-[6px] w-14 font-bold tracking-normal">8 R+1 Bat B</span>
        <XMark className="ml-[14px] text-[#111]" />
      </div>
      <div className="ml-1">
        <TabHouseIcon />
      </div>
      <span className="ml-[7px] w-[88px]">{'{3D}'}</span>
      <TabHouseIcon />
      <span className="ml-[6px] w-[88px]">J6</span>
      <SmallPlanIcon faded />
      <span className="ml-[6px]">8 R+1 Bat B</span>
      <Ico w={7} h={6} vb="0 0 7 6" className="mr-[5px] ml-auto">
        <path d="M0 .5h7" stroke="#2b2b2b" />
        <path d="M0 2h7L3.500 6z" fill="#2b2b2b" />
      </Ico>
    </div>
  );
}

function RedX() {
  return <path d="M8 8l5 5M13 8l-5 5" stroke="#c92b2b" strokeWidth="1.800" />;
}

function ViewControls() {
  return (
    <div className="flex h-[14px] items-center bg-[#f3f3f3] text-[10px] tracking-[-0.25px] text-[#333]">
      <span className="ml-[19px] w-[43px] whitespace-nowrap">1 : 100</span>
      <Ico w={14} h={12} vb="0 0 14 12">
        <path d="M.5 1h13v10H.5z" fill="#f3f3f3" stroke="#666" />
      </Ico>
      <Ico w={14} className="ml-[3px]">
        <path d="M1 5.500h8v6.500H1zM1 5.500L4.500 2H13L9 5.500M13 2v6.500L9 12" fill="#eee" stroke="#444" />
      </Ico>
      <Ico w={14} className="ml-0.5">
        <circle cx="6" cy="6" r="3.500" fill="#f9dc6c" stroke="#b98d1c" />
        <path d="M6 0v1.500M0 6h1.500M2 2l1 1M10 2L9 3M2 10l1-1" stroke="#b98d1c" />
        <RedX />
      </Ico>
      <Ico w={14} className="ml-[3px]">
        <circle cx="6.500" cy="5.500" r="4" fill="#dcebfa" stroke="#4074ad" />
        <path d="M1 12h7" stroke="#4074ad" strokeWidth="1.500" />
        <RedX />
      </Ico>
      <Ico w={14} className="ml-0.5">
        <path d="M3 5h8v6M3 5v8M0 7h3M5 3v4M9 3v4" stroke="#355f96" strokeWidth="1.500" />
        <path d="M4 6h6v5H4z" fill="#9fc0e6" />
        <RedX />
      </Ico>
      <Ico w={14} className="ml-[3px]">
        <path d="M3 5h6v6M3 5v8M0 7h3M5 3v4" stroke="#355f96" strokeWidth="1.500" />
        <path d="M4 6h4v5H4z" fill="#9fc0e6" />
        <circle cx="11" cy="4" r="2.500" fill="#dfeeff" stroke="#3c77c0" />
        <path d="M11 7v5" stroke="#3c77c0" strokeWidth="1.500" />
      </Ico>
      <Ico w={14} className="ml-[3px]">
        <path d="M0 3c3 0 4 1 4 3 0 3 4 3 4.500 0S13 5 12.500 8 8 9 8.500 6M8 4c2-3 4-2 5 0" stroke="#444" strokeWidth="1.100" />
      </Ico>
      <Ico w={8} h={12} vb="0 0 8 12" className="ml-[5px]">
        <circle cx="4" cy="4" r="3" fill="#dfeeff" stroke="#3c77c0" />
        <path d="M4 7.500V11" stroke="#3c77c0" strokeWidth="2" />
      </Ico>
      <Ico w={14} className="ml-[5px]">
        <path d="M1 3.500h12v8H1z" stroke="#333" strokeWidth="1.500" strokeDasharray="2 1" />
        <path d="M7 7l5 5M12 7l-5 5" stroke="#444" />
      </Ico>
      <Ico w={14} className="ml-[3px]">
        <path d="M1 4l3-2h8v9H1zM4 4v8M7 4v8M1 7h9" stroke="#444" />
        <path d="M2 5h4v5H2z" fill="#b23a3a" fillOpacity=".6" />
        <circle cx="11" cy="5" r="2.500" fill="#dfeeff" stroke="#3c77c0" />
        <path d="M11 8v4" stroke="#3c77c0" strokeWidth="1.500" />
      </Ico>
      <Ico w={14} className="ml-[3px]">
        <path d="M1 1v12M13 1v6M0 3h14M0 11h7" stroke="#444" />
        <path d="M8 8h5v5H8z" fill="#666" />
      </Ico>
      <Chevron dir="left" className="ml-[4px]" />
      <div className="ml-[246px] h-[13px] w-[13px] bg-[#cdcdcd]" />
      <Chevron dir="right" className="ml-[244px]" />
      <Ico w={8} vb="0 0 8 8" className="mt-1 ml-[7px]">
        <path d="M6 1h1.500M3.500 3.500H5M6 3.500h1.500M1 6h1.500M3.500 6H5M6 6h1.500" stroke="#aaa" strokeWidth="1.500" />
      </Ico>
    </div>
  );
}

function DrawingArea() {
  return (
    <div className="flex w-[784px] shrink-0 flex-col bg-[#f1f1f1]">
      <ViewTabs />
      <div className="flex h-[484px] border-t border-white pl-px">
        <div className="relative w-[768px] shrink-0">
          <FloorPlan />
          <NavBar />
        </div>
        <div className="flex w-3 shrink-0 flex-col items-center">
          <Chevron dir="up" className="mt-[3px]" />
          <div className="mt-[225px] h-[13px] w-3 bg-[#cdcdcd]" />
          <Chevron dir="down" className="mt-auto mb-[3px]" />
        </div>
      </div>
      <ViewControls />
    </div>
  );
}

/* ---------- project browser ---------- */

type Twig = 'pass' | 'tee' | 'end' | 'plus' | 'minus';

function TwigCell({ kind }: { kind: Twig }) {
  const line = { stroke: '#bcbcbc', strokeDasharray: '2 1.500' };
  return (
    <Ico w={17.5} h={14.67} vb="0 0 17.5 14.67">
      <path d={kind === 'end' ? 'M7.500 0v7.300' : 'M7.500 0v14.670'} {...line} />
      {kind !== 'pass' && <path d="M7.500 7.500h10" {...line} />}
      {(kind === 'plus' || kind === 'minus') && (
        <>
          <rect x="3.500" y="3.500" width="8" height="8" fill="#fff" stroke="#a0a5b2" />
          <path d={kind === 'plus' ? 'M5 7.500h5M7.500 5v5' : 'M5 7.500h5'} stroke="#4c587a" />
        </>
      )}
    </Ico>
  );
}

const TREE: [string, Twig[]][] = [
  ['Plans de structure (Fondations)', ['pass', 'minus']],
  ['0 Fondations', ['pass', 'pass', 'tee']],
  ['Fondations - Analytique', ['pass', 'pass', 'end']],
  ['Plans de structure (Site)', ['pass', 'minus']],
  ['Site', ['pass', 'pass', 'end']],
  ['Plans de structure (Vue en plan)', ['pass', 'plus']],
  ["Plans d'étage", ['pass', 'minus']],
  ['0 Fondations', ['pass', 'pass', 'tee']],
  ['1 R-1 BatA', ['pass', 'pass', 'tee']],
  ['2 RDC Bat A', ['pass', 'pass', 'tee']],
  ['3 R+1 Bat A', ['pass', 'pass', 'tee']],
  ['4 r+2 Bat A', ['pass', 'pass', 'tee']],
  ['5 R+3 Bat A', ['pass', 'pass', 'tee']],
  ['6 mezza BatA', ['pass', 'pass', 'tee']],
  ['6.2 toiture Bat A', ['pass', 'pass', 'tee']],
  ['7 RDC Bat B', ['pass', 'pass', 'tee']],
  ['8 R+1 Bat B', ['pass', 'pass', 'tee']],
  ['9 R+2 Bat B', ['pass', 'pass', 'tee']],
  ['10 R+3 Bat B', ['pass', 'pass', 'tee']],
  ['11 Mezza Bat B', ['pass', 'pass', 'tee']],
  ['12 AT B', ['pass', 'pass', 'end']],
  ['Vues 3D', ['pass', 'minus']],
  ['Modèle analytique', ['pass', 'pass', 'tee']],
  ['{3D}', ['pass', 'pass', 'tee']],
  ['{3D}1', ['pass', 'pass', 'end']],
  ['Elévations (Elévation de construction)', ['pass', 'minus']],
  ['Est', ['pass', 'pass', 'tee']],
  ['Nord', ['pass', 'pass', 'tee']],
  ['Ouest', ['pass', 'pass', 'tee']],
  ['Sud', ['pass', 'pass', 'end']],
  ['Coupes (Coupe du bâtiment)', ['pass', 'plus']],
];

function ProjectBrowser() {
  return (
    <div className="flex min-w-0 grow flex-col border-l-2 border-[#c6c6c6] bg-white text-[10px] tracking-[-0.15px] whitespace-nowrap text-[#333]">
      <div className="flex h-[18px] items-center justify-between bg-[#f0f0f0] pr-[3px] pl-0.5 tracking-[-0.25px]">
        Arborescence du projet - Bâtiment A et B.rtemi.rte
        <XMark className="text-[#111]" />
      </div>
      <div className="flex h-[501px]">
        <div className="w-[229px] shrink-0 overflow-hidden">
          <div className="flex h-[14.67px] items-center">
            <TwigCell kind="minus" />
            <Ico w={13} className="ml-px">
              <path d="M1 4V1h3M10 1h3v3M1 10v3h3M13 10v3h-3" stroke="#555" />
              <path d="M5 4h5v5l-1 1H4V5z" stroke="#444" />
            </Ico>
            <span className="ml-[3px] bg-[#dcdcdc] px-[1px] leading-[14px]">Vues (tout)</span>
          </div>
          {TREE.map(([label, cells], i) => (
            <div key={i} className="flex h-[14.67px] items-center">
              {cells.map((c, j) => (
                <TwigCell key={j} kind={c} />
              ))}
              <span className={clsx('ml-[4px]', label === '8 R+1 Bat B' && 'font-bold tracking-normal text-black')}>{label}</span>
            </div>
          ))}
          <div className="flex h-[14.67px] items-center">
            <TwigCell kind="tee" />
            <Ico w={13} className="ml-px">
              <path d="M.5 1.500h13v11H.5z" fill="#ddd" stroke="#777" />
              <path d="M2 5h4M8 5h4M2 7.500h4M8 7.500h4M2 10h4M8 10h4" stroke="#666" />
              <path d="M.5 2.500h13" stroke="#777" strokeWidth="2" />
            </Ico>
            <span className="ml-[4px]">Légendes</span>
          </div>
          <div className="flex h-[14.67px] items-center">
            <TwigCell kind="plus" />
            <Ico w={13} className="ml-px">
              <path d="M.5 1.500h13v11H.5z" fill="#f3f3f3" stroke="#777" />
              <path d="M1 6.500h12M1 9.500h12M5 4v8M9 4v8" stroke="#aaa" />
              <path d="M.5 2.500h13" stroke="#666" strokeWidth="2.500" />
            </Ico>
            <span className="ml-[4px]">Nomenclatures/Quantités (tout)</span>
          </div>
        </div>
        <div className="flex grow flex-col items-center bg-[#f0f0f0]">
          <Chevron dir="up" className="mt-[3px]" />
          <div className="mt-0.5 h-[423px] w-full bg-[#cdcdcd]" />
          <Chevron dir="down" className="mt-[52px]" />
        </div>
      </div>
    </div>
  );
}

/* ---------- status bar ---------- */

function Pointer() {
  return <path d="M8 5v8l2-1.800 1.300 2.600 1.200-.6-1.200-2.500H14z" fill="#fff" stroke="#333" strokeWidth=".8" />;
}

function StatusBar() {
  return (
    <div className="flex h-[21px] items-center bg-[#cbcbcb] text-[10px] tracking-[-0.2px] whitespace-nowrap text-[#333]">
      <span className="w-[408px] shrink-0 pl-px">Sols : Sol : Béton sur place 20 CM 3</span>
      <Ico w={14}>
        <path d="M1 6h3v7H1zM5.500 4h3v9h-3zM10 6h3v7h-3z" fill="#bbb" stroke="#888" />
        <circle cx="7" cy="2.500" r="1.500" fill="#999" />
      </Ico>
      <div className="ml-[5px] flex h-[15px] w-[170px] items-center justify-end bg-white">
        <div className="flex h-full w-[14px] items-center border-l border-[#ddd] pl-0.5">
          <Chevron dir="down" className="text-[#aaa]" />
        </div>
      </div>
      <Ico w={14} className="ml-1">
        <path d="M4 2h8l-2 4H6L3 12H1" stroke="#8a8a8a" strokeWidth="1.500" fill="#bbb" />
      </Ico>
      <span className="ml-1 w-[22px]">:0</span>
      <Ico w={14}>
        <path d="M.5 1.500h13v11H.5z" fill="#f5f5f5" stroke="#333" />
        <path d="M.5 2.500h13" stroke="#333" strokeWidth="2.500" />
        <path d="M4 6h7M4 8.500h7M6 11h5" stroke="#555" />
      </Ico>
      <Ico w={14} className="ml-[6px] opacity-50">
        <path d="M2 2h9v4H2zM4 7h9v5H4zM2 9h9" stroke="#555" strokeWidth="1.300" />
      </Ico>
      <div className="ml-[5px] flex h-[15px] w-[170px] items-center justify-between border border-[#ddd] bg-white pr-0.5 pl-0.5 text-[#8a8a8a]">
        Modèle de base
        <Chevron dir="down" className="text-[#aaa]" />
      </div>
      <div className="ml-[242px] flex items-center gap-1.5">
        <Ico w={14}>
          <path d="M1 3h12v3H1z" fill="#f6ce46" stroke="#b98413" />
          <path d="M4 6l2 3" stroke="#b98413" />
          <Pointer />
        </Ico>
        <Ico w={14}>
          <path d="M1 7l4-5h8L9 7zM1 10h8" fill="#cfe3f7" stroke="#2c6db0" />
          <Pointer />
        </Ico>
        <Ico w={14}>
          <path d="M2 1h6v4H2zM0 6h10M5 6v6" fill="#f4a23a" stroke="#c5531d" strokeWidth="1.300" />
          <path d="M9 1l4 4M13 1L9 5" stroke="#cf2222" strokeWidth="1.600" />
          <Pointer />
        </Ico>
        <Ico w={14}>
          <path d="M1 3l7-2v10l-7 2z" fill="#a9d1f5" stroke="#2c6db0" />
          <Pointer />
        </Ico>
        <Ico w={14}>
          <path d="M4 0v8M0 4h8" stroke="#333" strokeWidth="1.300" strokeDasharray="2 1" />
          <Pointer />
        </Ico>
        <Ico w={14}>
          <circle cx="7" cy="7" r="4.500" stroke="#9b9b9b" strokeWidth="2.200" strokeDasharray="3 1" />
        </Ico>
      </div>
      <Ico w={14} className="ml-[5px]">
        <path d="M1 1h12L8.500 7v6h-3V7z" fill="#d9dce3" stroke="#4a4d55" />
      </Ico>
      <span>:0</span>
    </div>
  );
}

/* ---------- taskbar ---------- */

function Taskbar() {
  return (
    <div className="flex h-9 items-center bg-[linear-gradient(90deg,#15232b,#12202a_40%,#0a121a)] text-[10px] tracking-[-0.15px] whitespace-nowrap text-white">
      <Ico w={14} className="ml-[13px]">
        <path d="M0 2l6-.9v5.400H0zM7 1l7-1v6.500H7zM0 7.500h6v5.400L0 12zM7 7.500h7V14l-7-1z" fill="#fff" />
      </Ico>
      <div className="ml-4 h-[17px] w-[24px] border border-[#5cb6ee] bg-[#2aa4f4]" />
      <Ico w={26} h={21} vb="0 0 26 21" className="ml-[6px]">
        <path d="M.7.700h24.600v19.600H.7z" fill="#33475c" stroke="#b9c5d2" strokeWidth="1.400" />
        <path d="M4 4l7 1v9l-7-1zM9 5l7 1v9l-7-1zM14 6l7 1v9l-7-1z" fill="#e2f2ec" stroke="#3a6d62" />
      </Ico>
      <Ico w={25} vb="0 0 25 25" className="ml-[6px]">
        <circle cx="12.500" cy="13" r="11.500" fill="#f5511e" />
        <path d="M18 2c5 4 7 9 5 14-3-4-4-7-5-14z" fill="#ffd53c" />
        <path d="M14 5c6 2 9 9 4 15-4 3-9 2-12-1 8 2 11-6 8-14z" fill="#ffa52a" />
        <circle cx="12" cy="12.500" r="5.500" fill="#3b3fa5" />
        <path d="M3 5c2 1 4 1 6 4-1 2 2 3 4 4-2 3-6 3-8 0C3 10 2 8 3 5z" fill="#ff8a1f" />
      </Ico>
      <Ico w={27} vb="0 0 27 27" className="ml-[6px]">
        <path d="M0 0h27v27H0z" fill="#d80e10" />
        <path d="M13.500 2v4M12.500 7L6.500 24M14.500 7l6 17M9 17.500c3 2 6 2 9 0" stroke="#fff" strokeWidth="2.200" />
        <circle cx="13.500" cy="7" r="2.300" fill="#fff" />
      </Ico>
      <div className="ml-[29px] flex h-[19px] w-5 shrink-0 items-center bg-[linear-gradient(#3f9be9,#1c5fc0_60%,#134296)]">
        <div className="flex h-[11px] w-[11px] items-center justify-center bg-[#1b52a6] text-[8px] font-bold">W</div>
      </div>
      <Ico w={20} vb="0 0 20 20" className="ml-[22px]">
        <ellipse cx="8.500" cy="6.500" rx="8" ry="5" fill="#f2e4e4" stroke="#c8474d" transform="rotate(-15 8.500 6.500)" />
        <path d="M6 7l7 6M10 3l3 10" stroke="#999" />
        <circle cx="15.500" cy="14" r="2.600" stroke="#2f8fd2" strokeWidth="1.400" />
        <circle cx="11.500" cy="16.500" r="2.400" stroke="#2f8fd2" strokeWidth="1.400" />
      </Ico>
      <Ico w={15} h={20} vb="0 0 15 20" className="ml-[23px]">
        <path d="M0 0h15v20H0z" fill="#fff" />
        <path d="M2 2h11v3H2z" fill="#15232b" />
        <path d="M2.500 8.500h10M2.500 11.500h10M2.500 14.500h10M2.500 17.500h10" stroke="#15232b" strokeWidth="1.500" strokeDasharray="2 2" />
      </Ico>
      <div className="ml-[17px] flex h-[34px] w-[127px] items-center self-end border-b-2 border-[#7db3e0] pl-2">
        <Ico w={16} h={17} vb="0 0 16 17">
          <path d="M0 1h5l2 2v13H0z" fill="#f3cf6a" />
          <path d="M4 3h6v13H4z" fill="#fbe39a" />
          <path d="M6 6h9v10H6z" fill="#3f4f66" />
          <path d="M8 7h5v3H8zM8 11.500h5v3H8z" fill="#7fa3c9" />
        </Ico>
        <span className="ml-1 tracking-normal">Vidéos</span>
      </div>
      <div className="ml-[14px]">
        <SteamIcon size={20} />
      </div>
      <div className="ml-[11px] flex h-[34px] w-[134px] items-center self-end border-b-2 border-[#7db3e0] bg-[#414c55] pl-[9px] shadow-[0_-2px_0_#414c55]">
        <Ico w={20} vb="0 0 20 20">
          <path d="M0 0h20v20H0z" fill="#dbe9f5" />
          <path d="M4 2h7.500a5 5 0 012 9.500L17 18h-4l-3.500-6H8v6H4z" fill="#1c62a8" />
          <path d="M8 5h3a2 2 0 010 4.500H8z" fill="#cfe2f3" />
        </Ico>
        <span className="ml-[2px] tracking-[-0.2px]">Autodesk Revit 201...</span>
      </div>
      <div className="ml-[3px] flex h-[34px] w-[128px] items-center self-end border-b-2 border-[#7db3e0] pl-[6px]">
        <ObsIcon size={20} />
        <span className="ml-[3px] tracking-[-0.28px]">OBS 24.0.1 (64-bit, ...</span>
      </div>

      <div className="ml-[192px] flex items-center gap-[6px]">
        <ObsIcon size={14} dot />
        <Ico w={14}>
          <circle cx="7" cy="7" r="6.500" fill="#8e1022" />
          <path d="M10.500 4.500C9 3 4 3 4 5.200S10 7 10 9.200 5 11 3.500 9.500" stroke="#fff" strokeWidth="1.700" />
        </Ico>
        <Ico w={14}>
          <path d="M2 12L7 2l2 4-3 6z" fill="#3fb4a4" />
          <path d="M7 2l6 10H9z" fill="#1c74c9" />
        </Ico>
        <SteamIcon size={14} />
        <Ico w={14}>
          <path d="M7 .5c2 1.500 4 2 5.500 2C13 8 11 12 7 13.500 3 12 1 8 1.500 2.500 3 2.500 5 2 7 .5z" fill="#18a07c" />
          <path d="M4.500 7l2 2 3.500-4" stroke="#fff" strokeWidth="1.300" />
        </Ico>
        <Ico w={14}>
          <path d="M1 3h12v8H1z" fill="#fff" />
          <path d="M3 4.500c2.500 0 2.500 5 0 5zM11 4.500c-2.500 0-2.500 5 0 5z" fill="#111" />
        </Ico>
        <Ico w={14}>
          <path d="M1 1h12v12H1z" fill="#4a5a35" stroke="#8caa5e" />
          <path d="M3 3h4v4H3z" fill="#c96b72" />
          <path d="M7 3h4v4H7z" fill="#7d70a8" />
          <path d="M3 8h8v3H3z" fill="#8aa066" />
        </Ico>
        <Ico w={14}>
          <path d="M1 3h12v9H1z" fill="#5d8c12" />
          <path d="M2 7c2-3 6-3 8 0-2 3-6 2-6 0s3-2 4 0" stroke="#cfe8a0" />
        </Ico>
        <Ico w={14}>
          <ellipse cx="7" cy="7" rx="5" ry="6.700" fill="#1477e0" />
          <path d="M4.500 4.500l5 5L7 12V2l2.500 2.500-5 5" stroke="#fff" />
        </Ico>
        <Ico w={14}>
          <rect x=".5" y=".5" width="13" height="13" rx="2" fill="#3c8fd4" stroke="#9cc9ee" />
          <path d="M3 4h6v3H5v3h6M9 4l2 2" stroke="#e3f1fc" />
        </Ico>
        <Ico w={14}>
          <path d="M6.500.5c2 1.500 4 1.500 5.500 1.500 0 6-1.500 9-5.500 11C2.500 11 1 8 1 2c2 0 3.500 0 5.500-1.500z" fill="#fff" />
          <path d="M6.500 1v12M1.500 6.500h10" stroke="#333" />
          <path d="M10 6.500l4 7H6z" fill="#f7c32b" />
          <path d="M10 9v2.500" stroke="#222" />
        </Ico>
        <Ico w={14}>
          <path d="M1 4h11v6H1z" stroke="#fff" />
          <path d="M2 5h5v4H2zM12.500 6h1v2h-1z" fill="#fff" />
        </Ico>
        <Ico w={14}>
          <path d="M3 13A10 10 0 0113 3M6 13a7 7 0 017-7M9 13a4 4 0 014-4" stroke="#848b91" />
          <path d="M2 0v4M0 2h4" stroke="#ddd" />
        </Ico>
        <Ico w={14}>
          <path d="M1 5h2.500L6.500 2v10L3.500 9H1z" stroke="#fff" />
          <path d="M8.500 5c1 1 1 3 0 4M10.500 3.500c2 2 2 5 0 7" stroke="#fff" />
        </Ico>
      </div>
      <div className="ml-[7px] flex w-[52px] flex-col items-center">
        <span className="flex h-4 items-center">21:01</span>
        <span className="flex h-4 items-center">30/09/2019</span>
      </div>
      <div className="ml-[5px] h-full w-px bg-[#5b656d]" />
    </div>
  );
}

export default function App() {
  return (
    <div className="h-[720px] w-[1280px] overflow-hidden bg-[#ededea] font-['Open_Sans',sans-serif] leading-none">
      <div className="bg-[#818181]">
        <TitleBar />
        <RibbonTabs />
      </div>
      <Ribbon />
      <div className="h-[21px] bg-[#eeeeec]" />
      <div className="flex h-[520px] border-t border-[#d0d0d0]">
        <Properties />
        <DrawingArea />
        <ProjectBrowser />
      </div>
      <StatusBar />
      <Taskbar />
    </div>
  );
}
